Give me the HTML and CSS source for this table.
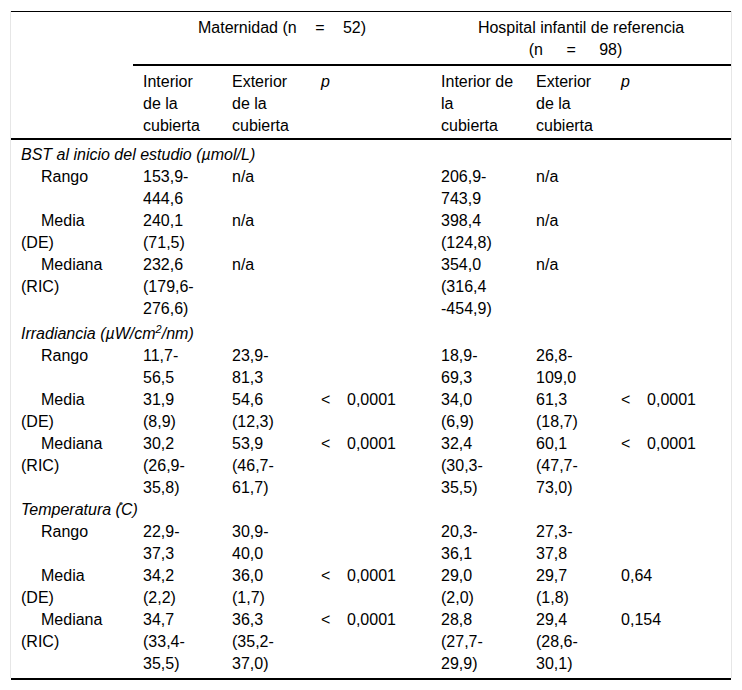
FILE: index.html
```html
<!DOCTYPE html>
<html lang="es">
<head>
<meta charset="utf-8">
<title>Tabla</title>
<link rel="stylesheet" href="styles.css">
</head>
<body>
<div class="wrap">
<table class="data">
  <colgroup>
    <col class="c1"><col class="c2"><col class="c3"><col class="c4"><col class="c5"><col class="c6"><col class="c7">
  </colgroup>
  <thead>
    <tr class="grp">
      <th rowspan="2" class="blank"></th>
      <th colspan="3" class="gh">Maternidad (n <span class="eq">=</span> 52)</th>
      <th colspan="3" class="gh">Hospital infantil de referencia<br><span class="n2">(n <span class="eq2">=</span> 98)</span></th>
    </tr>
    <tr class="sub">
      <th class="nar">Interior de la cubierta</th>
      <th class="nar">Exterior de la cubierta</th>
      <th class="pc"><i>p</i></th>
      <th class="mid">Interior de la cubierta</th>
      <th class="nar6">Exterior de la cubierta</th>
      <th class="pc"><i>p</i></th>
    </tr>
  </thead>
  <tbody>
    <tr class="first"><td colspan="7" class="sec">BST al inicio del estudio (µmol/L)</td></tr>
    <tr><td class="lab">Rango</td><td class="nar">153,9-444,6</td><td class="nar">n/a</td><td></td><td class="mid">206,9-743,9</td><td class="nar6">n/a</td><td></td></tr>
    <tr><td class="lab">Media (DE)</td><td class="nar">240,1 (71,5)</td><td class="nar">n/a</td><td></td><td class="mid">398,4 (124,8)</td><td class="nar6">n/a</td><td></td></tr>
    <tr><td class="lab">Mediana (RIC)</td><td class="nar">232,6 (179,6-276,6)</td><td class="nar">n/a</td><td></td><td class="mid">354,0 (316,4 -454,9)</td><td class="nar6">n/a</td><td></td></tr>

    <tr class="supr"><td colspan="7" class="sec">Irradiancia (µW/cm<sup>2</sup>/nm)</td></tr>
    <tr><td class="lab">Rango</td><td class="nar">11,7-56,5</td><td class="nar">23,9-81,3</td><td></td><td class="mid">18,9-69,3</td><td class="nar6">26,8-109,0</td><td></td></tr>
    <tr><td class="lab">Media (DE)</td><td class="nar">31,9 (8,9)</td><td class="nar">54,6 (12,3)</td><td><span class="lt">&lt;</span>0,0001</td><td class="mid">34,0 (6,9)</td><td class="nar6">61,3 (18,7)</td><td><span class="lt">&lt;</span>0,0001</td></tr>
    <tr><td class="lab">Mediana (RIC)</td><td class="nar">30,2 (26,9-35,8)</td><td class="nar">53,9 (46,7-61,7)</td><td><span class="lt">&lt;</span>0,0001</td><td class="mid">32,4 (30,3-35,5)</td><td class="nar6">60,1 (47,7-73,0)</td><td><span class="lt">&lt;</span>0,0001</td></tr>

    <tr><td colspan="7" class="sec">Temperatura (&#778;C)</td></tr>
    <tr><td class="lab">Rango</td><td class="nar">22,9-37,3</td><td class="nar">30,9-40,0</td><td></td><td class="mid">20,3-36,1</td><td class="nar6">27,3-37,8</td><td></td></tr>
    <tr><td class="lab">Media (DE)</td><td class="nar">34,2 (2,2)</td><td class="nar">36,0 (1,7)</td><td><span class="lt">&lt;</span>0,0001</td><td class="mid">29,0 (2,0)</td><td class="nar6">29,7 (1,8)</td><td>0,64</td></tr>
    <tr class="last"><td class="lab">Mediana (RIC)</td><td class="nar">34,7 (33,4-35,5)</td><td class="nar">36,3 (35,2-37,0)</td><td><span class="lt">&lt;</span>0,0001</td><td class="mid">28,8 (27,7-29,9)</td><td class="nar6">29,4 (28,6-30,1)</td><td>0,154</td></tr>
  </tbody>
</table>
</div>
<div class="rule"></div>
</body>
</html>
```

FILE: styles.css
```css
html, body {
  margin: 0;
  padding: 0;
  background: #fff;
}

body {
  font-family: "Liberation Sans", Arial, sans-serif;
  font-size: 16px;
  line-height: 22px;
  color: #000;
}

.wrap {
  margin: 11px 0 0 10px;
  width: 720px;
  border-left: 1px solid #e6e6e6;
  border-right: 1px solid #e6e6e6;
}

.data {
  width: 720px;
  table-layout: fixed;
  border-collapse: collapse;
  border-spacing: 0;
  border-top: 1px solid #000;
}

.c1 { width: 122px; }
.c2 { width: 89px; }
.c3 { width: 89px; }
.c4 { width: 120px; }
.c5 { width: 95px; }
.c6 { width: 85px; }
.c7 { width: 120px; }

.data th,
.data td {
  padding: 0 10px;
  text-align: left;
  vertical-align: top;
  font-weight: normal;
}

.data th.nar, .data td.nar { padding-right: 17px; }
.data th.mid { padding-right: 12px; }
.data td.mid { padding-right: 25px; }
.data th.nar6, .data td.nar6 { padding-right: 10px; }

.data td.lab {
  text-indent: 20px;
  padding-right: 20px;
}

.grp th.gh {
  text-align: center;
  padding-top: 5px;
  padding-bottom: 3px;
  border-bottom: 2px solid #000;
}

.eq {
  margin: 0 14px;
}

.eq2 {
  margin: 0 19px;
}

.n2 {
  margin-right: 11px;
}

.blank {
  border-bottom: 2px solid #000;
}

.sub th {
  padding-top: 5px;
  padding-bottom: 1px;
  border-bottom: 2px solid #000;
}

.first td {
  padding-top: 4px;
}

.supr td {
  padding-top: 3px;
}

.last td {
  padding-bottom: 3px;
}

.sec {
  font-style: italic;
}

.sec sup {
  font-size: 11px;
  line-height: 0;
}

.lt {
  display: inline-block;
  width: 26px;
}

.rule {
  margin-left: 11px;
  width: 720px;
  height: 2px;
  background: #000;
}
```
